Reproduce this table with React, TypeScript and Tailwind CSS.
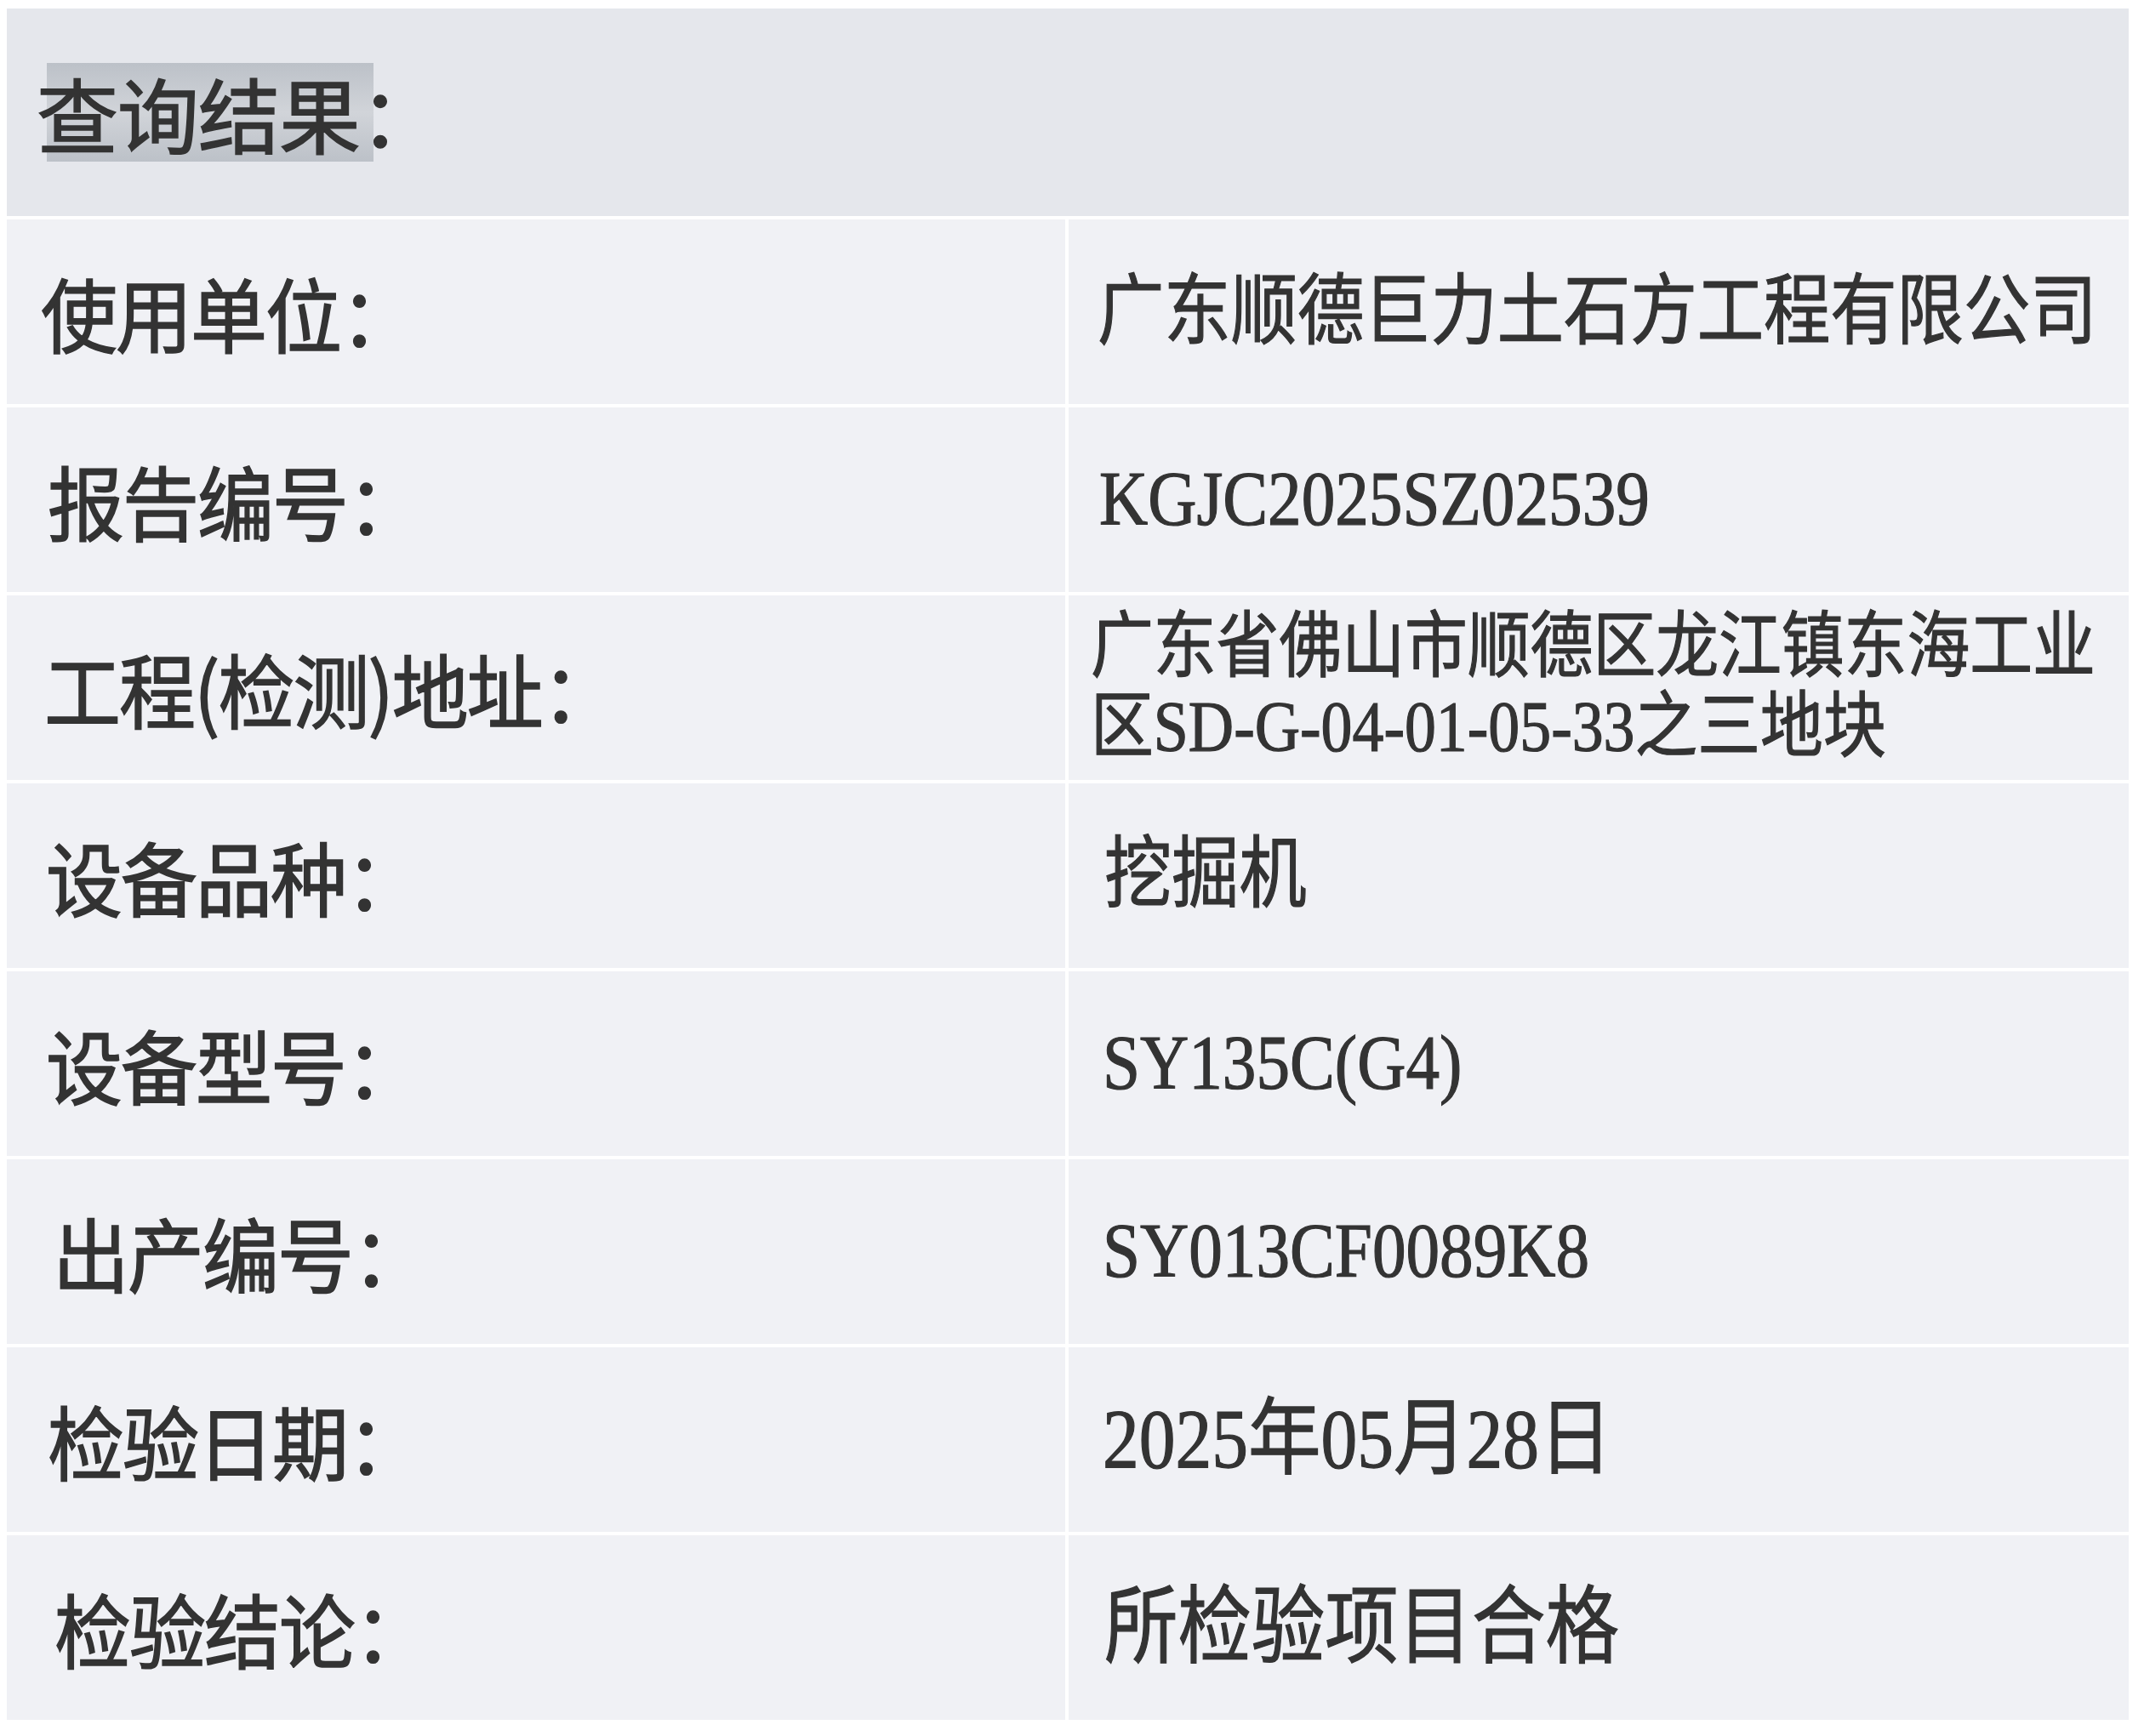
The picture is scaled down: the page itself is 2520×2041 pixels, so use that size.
import React from "react";

type Row = {
  label: string;
  value: string[];
  size: string;
  labelPad: string;
  valuePad: string;
};

const rows: Row[] = [
  { label: "使用单位：", value: ["广东顺德巨力土石方工程有限公司"], size: "text-[87px]", labelPad: "pl-[40px]", valuePad: "pl-[34px]" },
  { label: "报告编号：", value: ["KGJC2025SZ02539"], size: "text-[88px]", labelPad: "pl-[48px]", valuePad: "pl-[36px]" },
  { label: "工程(检测)地址：", value: ["广东省佛山市顺德区龙江镇东海工业", "区SD-G-04-01-05-33之三地块"], size: "text-[82px]", labelPad: "pl-[44px]", valuePad: "pl-[26px]" },
  { label: "设备品种：", value: ["挖掘机"], size: "text-[88px]", labelPad: "pl-[46px]", valuePad: "pl-[42px]" },
  { label: "设备型号：", value: ["SY135C(G4)"], size: "text-[88px]", labelPad: "pl-[46px]", valuePad: "pl-[40px]" },
  { label: "出产编号：", value: ["SY013CF0089K8"], size: "text-[88px]", labelPad: "pl-[54px]", valuePad: "pl-[40px]" },
  { label: "检验日期：", value: ["2025年05月28日"], size: "text-[95px]", labelPad: "pl-[48px]", valuePad: "pl-[40px]" },
  { label: "检验结论：", value: ["所检验项目合格"], size: "text-[96px]", labelPad: "pl-[56px]", valuePad: "pl-[42px]" },
];

const App = () => {
  return (
    <div className="min-h-screen bg-white pt-[10px] pl-[8px] font-['Liberation_Serif','Noto_Sans_CJK_SC',serif] text-[#333333]">
      <div className="w-[2494px] flex flex-col gap-[4px]">
        {/* header */}
        <div className="h-[244px] bg-[#e5e7ec] flex items-center pl-[35px]">
          <div className="relative">
            <div className="absolute left-[12px] w-[384px] top-[-10px] bottom-[-10px] bg-linear-to-b from-[#bcc1c8] via-[#d1d4d9] to-[#bcc1c8]" />
            <h1 className="relative text-[96px] leading-none tracking-[-1px] font-['Noto_Sans_CJK_SC',sans-serif] [-webkit-text-stroke:1.5px_#333333]">
              查询结果：
            </h1>
          </div>
        </div>

        {rows.map((row) => (
          <div key={row.label} className="grid grid-cols-[1244px_minmax(0,1fr)] gap-[4px] h-[217px]">
            <div className={`bg-[#f0f1f5] flex items-center ${row.labelPad}`}>
              <span className="text-[90px] leading-none tracking-[-2px] font-['Noto_Sans_CJK_SC',sans-serif] scale-y-[1.06] [-webkit-text-stroke:1.5px_#333333]">
                {row.label}
              </span>
            </div>
            <div className={`bg-[#f0f1f5] flex items-center overflow-hidden ${row.valuePad}`}>
              <div className={`${row.size} leading-[1.1] scale-x-[0.9] scale-y-[1.04] origin-left whitespace-nowrap [-webkit-text-stroke:1.2px_#333333]`}>
                {row.value.map((line) => (
                  <div key={line}>{line}</div>
                ))}
              </div>
            </div>
          </div>
        ))}
      </div>
    </div>
  );
};

export default App;
